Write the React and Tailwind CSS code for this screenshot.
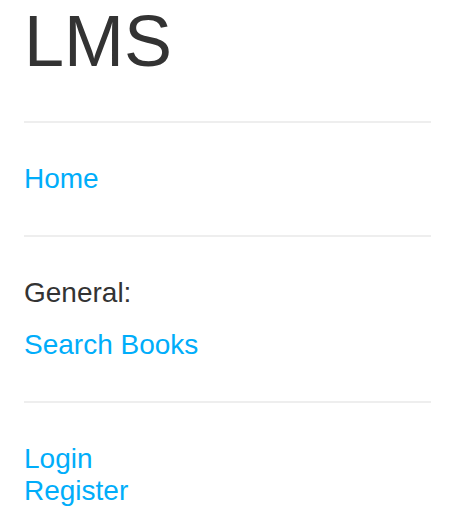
import React from "react";

const App = () => {
  return (
    <div
      className="min-h-[515px] bg-white pl-6 pr-[21px] text-[#333333]"
      style={{ fontFamily: '"Liberation Sans", Arial, sans-serif' }}
    >
      <h1 className="pt-[5px] text-[72px] leading-[72px] font-normal">LMS</h1>

      <hr className="mt-[44px] border-t-2 border-[#eeeeee]" />
      <ul className="py-10 text-[28px] leading-[32px]">
        <li>
          <a href="#" className="text-[#00adfa]">
            Home
          </a>
        </li>
      </ul>

      <hr className="border-t-2 border-[#eeeeee]" />
      <div className="py-10 text-[28px] leading-[32px]">
        <p>General:</p>
        <ul className="mt-5">
          <li>
            <a href="#" className="text-[#00adfa]">
              Search Books
            </a>
          </li>
        </ul>
      </div>

      <hr className="border-t-2 border-[#eeeeee]" />
      <ul className="pt-10 text-[28px] leading-[32px]">
        <li>
          <a href="#" className="text-[#00adfa]">
            Login
          </a>
        </li>
        <li>
          <a href="#" className="text-[#00adfa]">
            Register
          </a>
        </li>
      </ul>
    </div>
  );
};

export default App;
